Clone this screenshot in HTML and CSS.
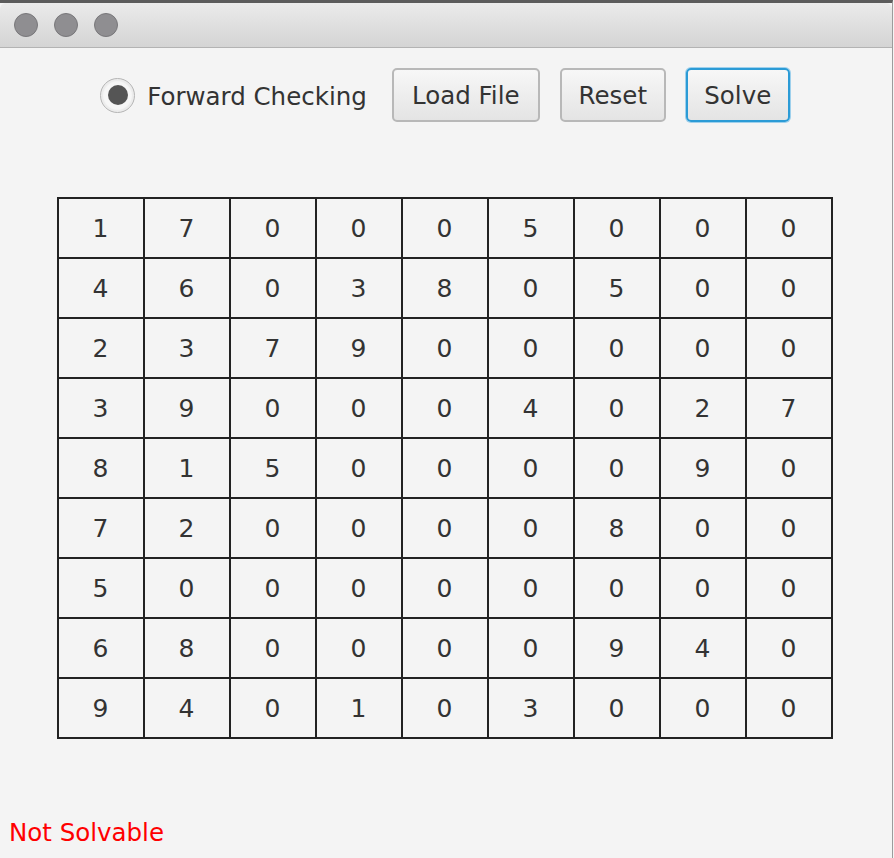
FILE: index.html
```html
<!DOCTYPE html>
<html>
<head>
<meta charset="utf-8">
<link rel="stylesheet" href="styles.css">
</head>
<body>
<div class="screen">
  <div class="window">
    <div class="titlebar">
      <span class="light"></span><span class="light"></span><span class="light"></span>
    </div>
    <div class="content">
      <div class="controls">
        <label class="radio"><span class="radio-ring"><span class="radio-dot"></span></span><span class="radio-text">Forward Checking</span></label>
        <button class="btn btn-load">Load File</button>
        <button class="btn btn-reset">Reset</button>
        <button class="btn btn-focus">Solve</button>
      </div>
      <div class="board">
        <div class="cell">1</div><div class="cell">7</div><div class="cell">0</div><div class="cell">0</div><div class="cell">0</div><div class="cell">5</div><div class="cell">0</div><div class="cell">0</div><div class="cell">0</div>
        <div class="cell">4</div><div class="cell">6</div><div class="cell">0</div><div class="cell">3</div><div class="cell">8</div><div class="cell">0</div><div class="cell">5</div><div class="cell">0</div><div class="cell">0</div>
        <div class="cell">2</div><div class="cell">3</div><div class="cell">7</div><div class="cell">9</div><div class="cell">0</div><div class="cell">0</div><div class="cell">0</div><div class="cell">0</div><div class="cell">0</div>
        <div class="cell">3</div><div class="cell">9</div><div class="cell">0</div><div class="cell">0</div><div class="cell">0</div><div class="cell">4</div><div class="cell">0</div><div class="cell">2</div><div class="cell">7</div>
        <div class="cell">8</div><div class="cell">1</div><div class="cell">5</div><div class="cell">0</div><div class="cell">0</div><div class="cell">0</div><div class="cell">0</div><div class="cell">9</div><div class="cell">0</div>
        <div class="cell">7</div><div class="cell">2</div><div class="cell">0</div><div class="cell">0</div><div class="cell">0</div><div class="cell">0</div><div class="cell">8</div><div class="cell">0</div><div class="cell">0</div>
        <div class="cell">5</div><div class="cell">0</div><div class="cell">0</div><div class="cell">0</div><div class="cell">0</div><div class="cell">0</div><div class="cell">0</div><div class="cell">0</div><div class="cell">0</div>
        <div class="cell">6</div><div class="cell">8</div><div class="cell">0</div><div class="cell">0</div><div class="cell">0</div><div class="cell">0</div><div class="cell">9</div><div class="cell">4</div><div class="cell">0</div>
        <div class="cell">9</div><div class="cell">4</div><div class="cell">0</div><div class="cell">1</div><div class="cell">0</div><div class="cell">3</div><div class="cell">0</div><div class="cell">0</div><div class="cell">0</div>
      </div>
      <div class="status">Not Solvable</div>
    </div>
  </div>
</div>
</body>
</html>
```
FILE: styles.css
```css
* { box-sizing: border-box; }
html, body { margin: 0; padding: 0; }
body {
  background: #f4f4f4;
  font-family: "DejaVu Sans", "Liberation Sans", sans-serif;
  color: #333;
}
.screen {
  width: 894px;
  height: 858px;
  overflow: hidden;
  background: #f4f4f4;
  display: flex;
}
.window {
  width: 893px;
  height: 858px;
  border-top: 3px solid #5c5c5c;
  border-right: 1px solid #9c9c9c;
  background: #f4f4f4;
  display: flex;
  flex-direction: column;
}
.titlebar {
  height: 45px;
  flex: none;
  background: linear-gradient(#ebebeb, #d4d4d4);
  border-bottom: 1px solid #b3b3b3;
  border-radius: 6px 6px 0 0;
  display: flex;
  align-items: center;
  padding-left: 14px;
  gap: 16px;
}
.light {
  width: 24px;
  height: 24px;
  border-radius: 50%;
  background: #8f8e91;
  border: 1px solid #78777a;
}
.content {
  flex: 1;
  display: flex;
  flex-direction: column;
  align-items: center;
}
.controls {
  margin-top: 20px;
  height: 54px;
  display: flex;
  align-items: center;
  margin-right: 2px;
}
.radio {
  display: flex;
  align-items: center;
  margin-right: 25px;
}
.radio-ring {
  width: 35px;
  height: 35px;
  border-radius: 50%;
  border: 1px solid #b4b4b4;
  background: radial-gradient(circle, #f7f7f7 55%, #e2e2e2 100%);
  display: flex;
  align-items: center;
  justify-content: center;
  box-shadow: inset 0 0 0 2px #ececec;
}
.radio-dot {
  width: 20px;
  height: 20px;
  border-radius: 50%;
  background: #555;
}
.radio-text {
  margin-left: 12px;
  padding-top: 3px;
  font-size: 24.5px;
  color: #333;
}
.btn {
  height: 54px;
  font-family: inherit;
  font-size: 24.5px;
  color: #333;
  background: linear-gradient(#f7f7f7, #e4e4e4);
  border: 2px solid #b8b8b8;
  border-radius: 5px;
  padding: 0;
  margin-right: 20px;
}
.btn:last-child { margin-right: 0; }
.btn-load { width: 148px; }
.btn-reset { width: 106px; }
.btn-focus {
  border-color: #2b9bd6;
  box-shadow: 0 0 0 1px #9ed0ec;
  width: 104px;
}
.board {
  margin-top: 75px;
  margin-right: 3px;
  display: grid;
  grid-template-columns: repeat(9, 84px);
  grid-auto-rows: 58px;
  gap: 2px;
  padding: 2px;
  background: #222;
}
.cell {
  background: #f4f4f4;
  display: flex;
  align-items: center;
  justify-content: center;
  font-size: 25px;
  color: #333;
}
.status {
  align-self: flex-start;
  margin-top: 79px;
  margin-left: 9px;
  font-size: 24.5px;
  color: #ff0000;
}
```
